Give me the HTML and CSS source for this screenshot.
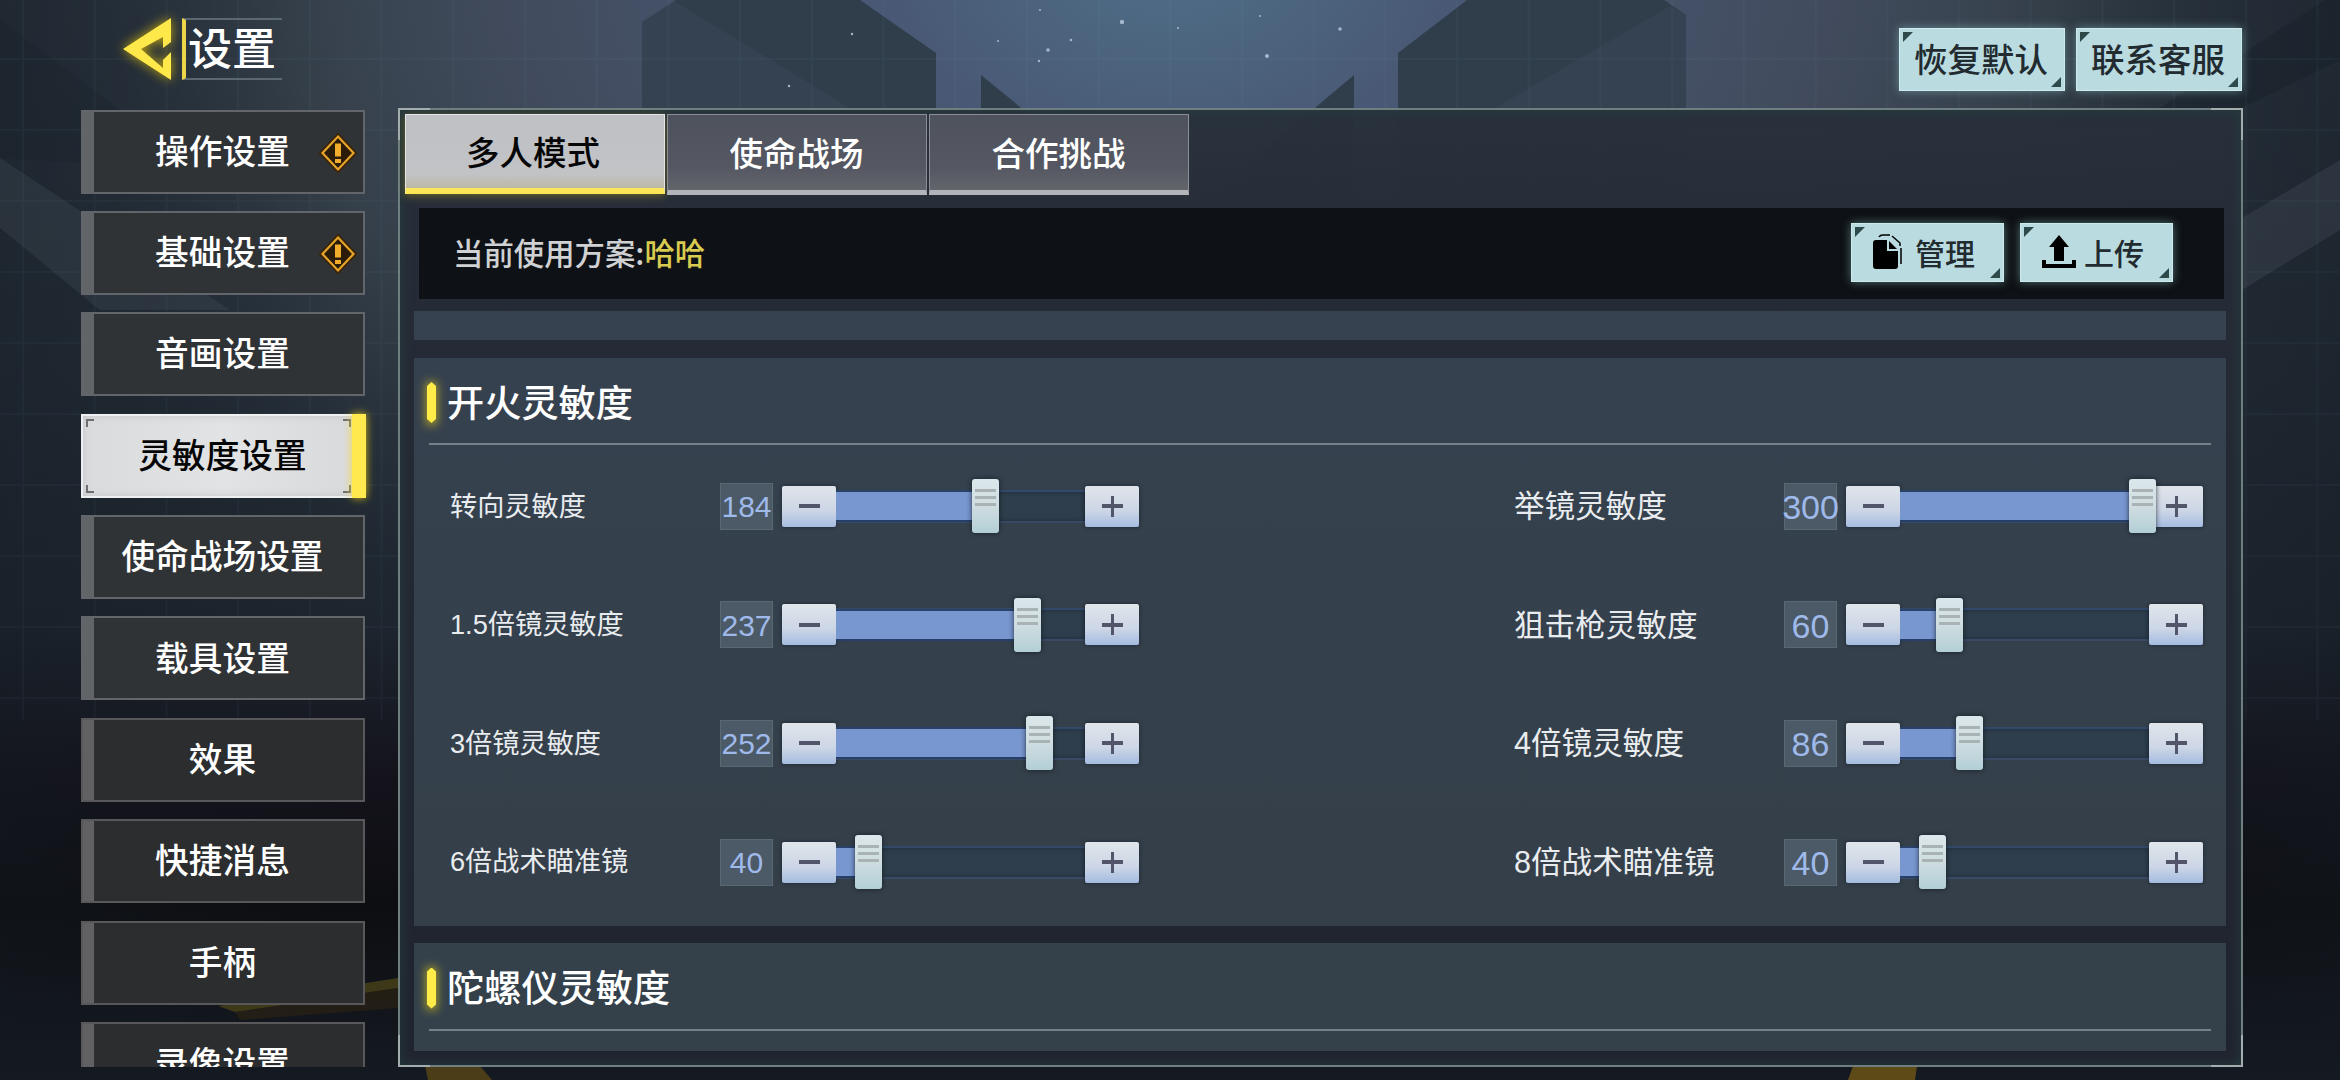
FILE: index.html
```html
<!DOCTYPE html>
<html lang="zh-CN">
<head>
    <meta charset="UTF-8">
    <meta name="viewport" content="width=device-width, initial-scale=1.0">
    <title>设置</title>
    <link rel="stylesheet" href="styles.css">
</head>
<body>
    <svg class="backdrop" viewBox="0 0 2340 1080" width="2340" height="1080">
        <defs>
            <linearGradient id="base" x1="0" y1="0" x2="0" y2="1">
                <stop offset="0" stop-color="#29333d"/>
                <stop offset="0.3" stop-color="#242d37"/>
                <stop offset="0.58" stop-color="#1d252e"/>
                <stop offset="0.72" stop-color="#14131c"/>
                <stop offset="0.84" stop-color="#0d0e11"/>
                <stop offset="1" stop-color="#151a22"/>
            </linearGradient>
            <radialGradient id="glow" gradientUnits="userSpaceOnUse" cx="1170" cy="-60" r="1180" gradientTransform="scale(1 0.7)">
                <stop offset="0" stop-color="#4f6f88"/>
                <stop offset="0.25" stop-color="#495874"/>
                <stop offset="0.55" stop-color="#434d60" stop-opacity="0.95"/>
                <stop offset="0.75" stop-color="#39444f" stop-opacity="0.8"/>
                <stop offset="1" stop-color="#2a333e" stop-opacity="0"/>
            </radialGradient>
            <linearGradient id="corner" x1="0" y1="0" x2="1" y2="0">
                <stop offset="0" stop-color="#131a22" stop-opacity="0.4"/>
                <stop offset="0.15" stop-color="#131a22" stop-opacity="0"/>
                <stop offset="0.85" stop-color="#131a22" stop-opacity="0"/>
                <stop offset="1" stop-color="#131a22" stop-opacity="0.4"/>
            </linearGradient>
            <pattern id="grid" x="22" y="58" width="71.7" height="71" patternUnits="userSpaceOnUse">
                <path d="M0 1H71.7M1 0V71" stroke="#7f9fb4" stroke-opacity="0.05" stroke-width="2"/>
            </pattern>
        </defs>
        <rect width="2340" height="1080" fill="url(#base)"/>
        <rect width="2340" height="1080" fill="url(#glow)"/>
        <rect width="2340" height="1080" fill="url(#corner)"/>
        <!-- side beams -->
        <path d="M0 20L200 170L0 158Z" fill="#1a222b" fill-opacity="0.35"/>
        <path d="M0 158L230 310H100L0 228Z" fill="#5a6570" fill-opacity="0.2"/>
        <path d="M2340 160L2242 218V290L2340 230Z" fill="#5a6570" fill-opacity="0.22"/>
        <path d="M2340 0H2325L2160 108H2242L2340 60Z" fill="#151c25" fill-opacity="0.35"/>
        <!-- pillars -->
        <g fill="#303e4c">
            <path d="M642 300V22L676 0H860L936 53V300Z"/>
            <path d="M1686 300V15L1664 0H1467L1398 53V300Z"/>
            <path d="M981 300V75L1170 230L1354 75V300Z"/>
        </g>
        <g fill="#4a5465" fill-opacity="0.22">
            <path d="M642 22L672 0L850 108H642Z"/>
            <path d="M1686 15L1670 6L1495 108H1686Z"/>
        </g>
        <rect width="2340" height="720" fill="url(#grid)"/>
        <g fill="#a3b8cb">
            <circle cx="1122" cy="22" r="2.2"/><circle cx="1048" cy="50" r="1.8"/><circle cx="1071" cy="40" r="1.3"/>
            <circle cx="1267" cy="56" r="2"/><circle cx="1340" cy="29" r="1.8"/><circle cx="852" cy="34" r="1.2"/>
            <circle cx="998" cy="41" r="1"/><circle cx="1039" cy="61" r="1.2"/><circle cx="1260" cy="16" r="1"/>
            <circle cx="1040" cy="10" r="1"/><circle cx="789" cy="86" r="1.2"/><circle cx="1178" cy="28" r="1"/>
        </g>
        <!-- floor lights -->
        <path d="M218 1006L398 978V988L235 1012Z" fill="#5c5117" fill-opacity="0.6"/>
        <path d="M235 1012L398 988V1008L240 1020Z" fill="#33270f" fill-opacity="0.5"/>
        <path d="M425 1066H480L492 1080H428Z" fill="#4a3d18"/>
        <path d="M1853 1066H1917L1915 1080H1848Z" fill="#5d4a17"/>
    </svg>

    <div class="page">
        <header class="topbar">
            <div class="title-group">
                <svg class="back" width="52" height="66" viewBox="0 0 52 66">
                    <path fill="#ffe84a" fill-rule="evenodd" d="M50 2V26L42 32V21L20 33L42 52V44L50 36V64L2 33Z"/>
                </svg>
                <h1 class="title">设置</h1>
            </div>
            <div class="top-actions">
                <button class="btn btn-top">恢复默认</button>
                <button class="btn btn-top">联系客服</button>
            </div>
        </header>

        <div class="main">
            <nav class="sidebar">
                <a class="nav-item">操作设置
                    <svg class="badge" width="40" height="40" viewBox="0 0 40 40">
                        <path d="M20 1L38 20L20 39L2 20Z" fill="#2c1a06" stroke="#3c2406" stroke-width="2"/>
                        <path d="M20 3.500L35.500 20L20 36.500L4.500 20Z" fill="#2b1c0a" stroke="#e5a52b" stroke-width="2.200"/>
                        <path d="M17 10.500H23V23.500H17ZM17 26H23V30H17Z" fill="#f0ac2a"/>
                    </svg>
                </a>
                <a class="nav-item">基础设置
                    <svg class="badge" width="40" height="40" viewBox="0 0 40 40">
                        <path d="M20 1L38 20L20 39L2 20Z" fill="#2c1a06" stroke="#3c2406" stroke-width="2"/>
                        <path d="M20 3.500L35.500 20L20 36.500L4.500 20Z" fill="#2b1c0a" stroke="#e5a52b" stroke-width="2.200"/>
                        <path d="M17 10.500H23V23.500H17ZM17 26H23V30H17Z" fill="#f0ac2a"/>
                    </svg>
                </a>
                <a class="nav-item">音画设置</a>
                <a class="nav-item active">灵敏度设置
                    <svg class="corners" width="266" height="74" viewBox="0 0 266 74">
                        <path d="M1 8V1H8M257 1H264V8M264 66V73H257M8 73H1V66" fill="none" stroke="#6d6e70" stroke-width="2"/>
                    </svg>
                </a>
                <a class="nav-item">使命战场设置</a>
                <a class="nav-item">载具设置</a>
                <a class="nav-item">效果</a>
                <a class="nav-item">快捷消息</a>
                <a class="nav-item">手柄</a>
                <a class="nav-item">录像设置</a>
            </nav>

            <section class="panel">
                <svg class="frame" width="1845" height="959" viewBox="0 0 1845 959">
                    <path d="M1 32V1H32M1813 1H1844V32M1844 927V958H1813M32 958H1V927" fill="none" stroke="#a4adad" stroke-width="2"/>
                </svg>
                <div class="tabs">
                    <a class="tab tab-active">多人模式</a>
                    <a class="tab">使命战场</a>
                    <a class="tab">合作挑战</a>
                </div>

                <div class="scheme">
                    <p class="scheme-name">当前使用方案:<span>哈哈</span></p>
                    <button class="btn btn-small">
                        <svg width="30" height="35" viewBox="0 0 30 35">
                            <path d="M3 6H14V17H25V32Q25 35 22 35H3Q0 35 0 32V9Q0 6 3 6Z"/>
                            <path d="M16 7L24 15H16Z"/>
                            <path d="M6 3Q7 1 10 1H17M19 2L27 9V12M28 14V30" fill="none" stroke="#000" stroke-width="1.500"/>
                        </svg>
                        管理
                    </button>
                    <button class="btn btn-small">
                        <svg width="34" height="34" viewBox="0 0 34 34">
                            <path d="M17 0L27 12H22V26H12V12H7Z"/>
                            <path d="M0 25H4V29H30V25H34V33H0Z"/>
                        </svg>
                        上传
                    </button>
                </div>

                <div class="scroll">
                    <div class="card card-tail"></div>

                    <div class="card card-fire">
                        <h2 class="card-title">开火灵敏度</h2>
                        <div class="rows">
                            <div class="row">
                                <span class="label">转向灵敏度</span>
                                <span class="value">184</span>
                                <button class="step minus"></button>
                                <div class="track"><div class="fill" style="width: 136px"></div><div class="thumb"></div></div>
                                <button class="step plus"></button>
                            </div>
                            <div class="row wide">
                                <span class="label">举镜灵敏度</span>
                                <span class="value">300</span>
                                <button class="step minus"></button>
                                <div class="track"><div class="fill" style="width: 229px"></div><div class="thumb"></div></div>
                                <button class="step plus"></button>
                            </div>
                            <div class="row">
                                <span class="label">1.5倍镜灵敏度</span>
                                <span class="value">237</span>
                                <button class="step minus"></button>
                                <div class="track"><div class="fill" style="width: 178px"></div><div class="thumb"></div></div>
                                <button class="step plus"></button>
                            </div>
                            <div class="row wide">
                                <span class="label">狙击枪灵敏度</span>
                                <span class="value">60</span>
                                <button class="step minus"></button>
                                <div class="track"><div class="fill" style="width: 36px"></div><div class="thumb"></div></div>
                                <button class="step plus"></button>
                            </div>
                            <div class="row">
                                <span class="label">3倍镜灵敏度</span>
                                <span class="value">252</span>
                                <button class="step minus"></button>
                                <div class="track"><div class="fill" style="width: 190px"></div><div class="thumb"></div></div>
                                <button class="step plus"></button>
                            </div>
                            <div class="row wide">
                                <span class="label">4倍镜灵敏度</span>
                                <span class="value">86</span>
                                <button class="step minus"></button>
                                <div class="track"><div class="fill" style="width: 56px"></div><div class="thumb"></div></div>
                                <button class="step plus"></button>
                            </div>
                            <div class="row">
                                <span class="label">6倍战术瞄准镜</span>
                                <span class="value">40</span>
                                <button class="step minus"></button>
                                <div class="track"><div class="fill" style="width: 19px"></div><div class="thumb"></div></div>
                                <button class="step plus"></button>
                            </div>
                            <div class="row wide">
                                <span class="label">8倍战术瞄准镜</span>
                                <span class="value">40</span>
                                <button class="step minus"></button>
                                <div class="track"><div class="fill" style="width: 19px"></div><div class="thumb"></div></div>
                                <button class="step plus"></button>
                            </div>
                        </div>
                    </div>

                    <div class="card card-gyro">
                        <h2 class="card-title">陀螺仪灵敏度</h2>
                    </div>
                </div>
            </section>
        </div>
    </div>
</body>
</html>
```
FILE: styles.css
```css
* {
    box-sizing: border-box;
}
body {
    margin: 0;
    width: 2340px;
    height: 1080px;
    overflow: hidden;
    background: #161b22;
    color: #fff;
    font-family: "Noto Sans CJK SC", sans-serif;
    line-height: 1;
}
h1, h2, p {
    margin: 0;
}
button {
    border: none;
    padding: 0;
    font-family: inherit;
    line-height: 1;
}
.backdrop {
    position: absolute;
    top: 0;
    left: 0;
}
.page {
    position: relative;
    height: 1080px;
    padding: 0 97px 13px 81px;
    display: flex;
    flex-direction: column;
}

/* top bar */
.topbar {
    height: 108px;
    flex: none;
    display: flex;
    justify-content: space-between;
    align-items: flex-start;
}
.title-group {
    display: flex;
    align-items: flex-start;
    padding: 16px 0 0 40px;
    gap: 9px;
}
.back {
    overflow: visible;
    filter: drop-shadow(0 0 6px rgba(255, 215, 0, 0.75));
}
.title {
    margin-top: 2px;
    width: 100px;
    height: 62px;
    padding: 4px 0 0 2px;
    border-left: 4px solid #ecd549;
    border-top: 2px solid #5b6871;
    border-bottom: 2px solid #5b6871;
    font-size: 44px;
    font-weight: 500;
    white-space: nowrap;
}
.top-actions {
    display: flex;
    gap: 11px;
    padding: 28px 1px 0 0;
}
.btn {
    position: relative;
    display: flex;
    align-items: center;
    justify-content: center;
    background: #badbe0;
    border: 1px solid #cdebee;
    box-shadow: 0 0 9px rgba(150, 205, 205, 0.5);
    color: #222b30;
    font-weight: 500;
}
.btn::before,
.btn::after {
    content: "";
    position: absolute;
    width: 10px;
    height: 10px;
    background: #2f4a4b;
}
.btn::before {
    top: 3px;
    left: 3px;
    clip-path: polygon(0 0, 100% 0, 0 100%);
}
.btn::after {
    right: 3px;
    bottom: 3px;
    clip-path: polygon(100% 0, 100% 100%, 0 100%);
}
.btn-top {
    width: 166px;
    height: 63px;
    font-size: 33.5px;
    padding: 0 2px 3px 0;
}

/* left menu */
.main {
    flex: 1;
    min-height: 0;
    display: flex;
    gap: 13px;
}
/* wider than its items so the active glow is not cut */
.sidebar {
    width: 304px;
    height: 959px;
    padding-top: 1.5px;
    overflow: hidden;
    display: flex;
    flex-direction: column;
    gap: 17.4px;
}
.nav-item {
    position: relative;
    flex: none;
    width: 284px;
    height: 84px;
    display: flex;
    align-items: center;
    justify-content: center;
    padding: 0 1px 4px 0;
    border: 2px solid #62666a;
    background: linear-gradient(90deg, #626568 11px, #303336 11px);
    font-size: 33.7px;
    font-weight: 500;
}
.nav-item:nth-child(n+7) {
    border-color: #58585a;
    background: linear-gradient(90deg, #616163 11px, #2c2d2f 11px);
}
.nav-item.active {
    color: #060606;
    background: linear-gradient(90deg, #dadbdd, #e2e3e5 50%, #d8d9db);
    border-color: #eeeff0;
    box-shadow: inset 0 0 8px #c4c5c8;
}
.nav-item.active::after {
    content: "";
    position: absolute;
    top: -2px;
    right: -3px;
    width: 14px;
    height: 84px;
    background: #ffe94e;
    box-shadow: 0 0 9px rgba(255, 220, 20, 0.8);
}
.corners {
    position: absolute;
    top: 3px;
    left: 3px;
}
.badge {
    position: absolute;
    top: 21px;
    right: 5px;
}

/* right panel */
.panel {
    position: relative;
    width: 1845px;
    height: 959px;
    flex: none;
    border: 2px solid #6f7f80;
    background: linear-gradient(#28303bf2, #262c37 150px, #20242f);
    box-shadow: inset 0 0 14px rgba(38, 64, 62, 0.8);
    padding: 4px 15px 14px 5px;
}
.frame {
    position: absolute;
    top: -2px;
    left: -2px;
}
.tabs {
    display: flex;
    gap: 2px;
}
.tab {
    width: 260px;
    height: 81px;
    display: flex;
    align-items: center;
    justify-content: center;
    padding: 0 1px 1px 0;
    border: 1px solid #8b8e93;
    border-bottom: 5px solid #b4b5ba;
    background: linear-gradient(#4e525d 0, #555862 70%, #63656c);
    font-size: 33.5px;
    font-weight: 500;
}
.tab-active {
    color: #060606;
    height: 80px;
    border: 1px solid #e4e5e8;
    border-bottom: 6px solid #fbe658;
    background: linear-gradient(#bfc0c4 0, #c2c3c6 80%, #bdb9a6);
    box-shadow: 0 2px 8px rgba(200, 180, 20, 0.4);
    padding: 0 4px 1px 0;
}
.scheme {
    display: flex;
    align-items: center;
    height: 91px;
    margin: 13px 2px 0 14px;
    padding: 0 51px 2px 34px;
    background: #0e1115;
}
.scheme-name {
    flex: 1;
    font-size: 30.4px;
    font-weight: 500;
    color: #cfd1d3;
}
.scheme-name span {
    color: #d8cb50;
}
.btn-small {
    width: 153px;
    height: 59px;
    padding: 0 7px 2px 0;
    gap: 12px;
    font-size: 30px;
}
.btn-small + .btn-small {
    margin-left: 16px;
    gap: 8px;
}
.scroll {
    padding: 12px 0 0 9px;
    display: flex;
    flex-direction: column;
}
.card {
    position: relative;
    z-index: 0;
    background: #36424f;
    padding: 0 15px;
}
.card-tail {
    height: 29px;
}
.card-fire {
    height: 568px;
    margin-top: 18px;
    background: linear-gradient(#36414f, #34404b 60%, #353f4a);
}
.card-gyro {
    height: 108px;
    margin-top: 17px;
    background: #34414b;
}
.card-title {
    position: relative;
    height: 87px;
    display: flex;
    align-items: center;
    gap: 11px;
    padding-top: 2px;
    border-bottom: 2px solid #77818b;
    font-size: 37.2px;
    font-weight: 500;
}
.card-gyro .card-title {
    height: 88px;
}
.card-title::before {
    content: "";
    width: 9px;
    height: 41px;
    margin: 2px 0 0 -2px;
    background: #ffec48;
    clip-path: polygon(50% 0, 100% 4px, 100% 37px, 50% 100%, 0 37px, 0 4px);
}
.card-title::after {
    content: "";
    position: absolute;
    left: 1px;
    top: 28px;
    width: 3px;
    height: 35px;
    z-index: -1;
    box-shadow: 0 0 10px 4px rgba(255, 225, 20, 0.6);
}
.rows {
    display: grid;
    grid-template-columns: 1064px 1fr;
    grid-auto-rows: 118.6px;
    padding: 2px 0 0 21px;
}
.row {
    display: flex;
    align-items: center;
}
.label {
    width: 270px;
    font-family: "Liberation Sans", "Noto Sans CJK SC", sans-serif;
    font-size: 27.2px;
    color: #e9ecef;
    white-space: nowrap;
}
.value {
    width: 53px;
    height: 47px;
    margin-right: 9px;
    flex: none;
    display: flex;
    align-items: center;
    justify-content: center;
    border: 1px solid #596972;
    background: #4b5a66;
    color: #9fb9ea;
    font-family: "Liberation Sans", sans-serif;
    font-size: 30px;
    padding-top: 2px;
}
.wide .label {
    font-size: 30.6px;
}
.wide .value {
    font-size: 34px;
}
.step {
    width: 54px;
    height: 41px;
    flex: none;
    border-radius: 2px;
    box-shadow: 0 0 4px rgba(20, 28, 40, 0.7);
    background-color: #c8d4e8;
    background-image: linear-gradient(#53556a, #53556a), linear-gradient(#dfe5ea, #cdd6e6 60%, #a4bce0);
    background-size: 21px 4px, 100% 100%;
    background-position: center, center;
    background-repeat: no-repeat;
}
.plus {
    background-image: linear-gradient(#53556a, #53556a), linear-gradient(#53556a, #53556a), linear-gradient(#dfe5ea, #cdd6e6 60%, #a4bce0);
    background-size: 21px 4px, 3px 21px, 100% 100%;
    background-position: center, center, center;
}
.track {
    width: 249px;
    height: 33px;
    display: flex;
    align-items: center;
    background: #2f3e4c;
    border-top: 2px solid #33496a;
    border-bottom: 2px solid #3a4a66;
    box-shadow: inset 0 0 5px #1e2d3e;
}
.fill {
    height: 28px;
    flex: none;
    background: #7896cf;
    box-shadow: 0 2px 0 #263f69, 0 -2px 0 #2a4169;
}
.thumb {
    width: 27px;
    height: 54px;
    flex: none;
    z-index: 1;
    border-radius: 3px;
    box-shadow: 0 0 5px rgba(15, 22, 30, 0.8);
    background-image: linear-gradient(#a9b3b5, #a9b3b5), linear-gradient(#a9b3b5, #a9b3b5), linear-gradient(#a9b3b5, #a9b3b5), linear-gradient(#dbe7ea, #cfdde1 50%, #b3cfd6);
    background-size: 21px 3px, 21px 3px, 21px 3px, 100% 100%;
    background-position: 3px 10px, 3px 17px, 3px 24px, 0 0;
    background-repeat: no-repeat;
}
```
